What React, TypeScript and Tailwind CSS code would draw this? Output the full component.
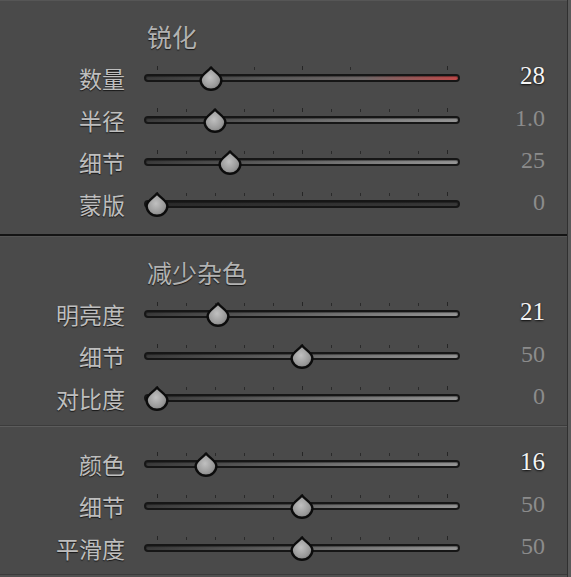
import React from "react";

type Row = {
  label: string;
  value: string;
  frac: number;
  active?: boolean;
  kind?: "amount" | "mask" | "normal";
};

const TICKS_10 = [0, 0.1, 0.2, 0.3, 0.4, 0.5, 0.6, 0.7, 0.8, 0.9, 1];
const TICKS_AMOUNT = [0, 1 / 3, 0.5, 2 / 3, 1];

function Thumb({ id }: { id: string }) {
  return (
    <svg width="26" height="25" viewBox="0 0 26 25" className="block">
      <defs>
        <radialGradient id={id} cx="0.45" cy="0.45" r="0.7">
          <stop offset="0" stopColor="#c0c0c0" />
          <stop offset="0.6" stopColor="#999999" />
          <stop offset="1" stopColor="#6c6c6c" />
        </radialGradient>
      </defs>
      <path
        d="M13 1.4 C15 4.8 23.4 8.8 23.4 14 A10.4 9.8 0 0 1 2.6 14 C2.6 8.8 11 4.8 13 1.4 Z"
        fill={`url(#${id})`}
        stroke="#0c0c0c"
        strokeWidth="2.4"
        strokeLinejoin="round"
      />
    </svg>
  );
}

function Slider({ row, id }: { row: Row; id: string }) {
  const ticks = row.kind === "amount" ? TICKS_AMOUNT : TICKS_10;
  const trackClass =
    row.kind === "amount"
      ? "bg-[linear-gradient(to_right,#3a3a3a,#5a5a5a_40%,#706868_70%,#c04a4a)]"
      : row.kind === "mask"
        ? "bg-[linear-gradient(to_right,#2a2a2a,#383838)]"
        : "bg-[linear-gradient(to_right,#3a3a3a,#5e5e5e_40%,#848484_80%,#949494)]";
  return (
    <div className="relative w-[316px] h-[42px] shrink-0">
      {ticks.map((f, i) => {
        const major = i === 0 || i === ticks.length - 1 || Math.abs(f - 0.5) < 0.001;
        return (
          <div
            key={i}
            className={
              major
                ? "absolute top-[9px] h-[4px] w-px bg-[#262626]"
                : "absolute top-[10px] h-[3px] w-px bg-[#2a2a2a]"
            }
            style={{ left: 13 + 290 * f }}
          />
        );
      })}
      <div
        className={`absolute left-0 right-0 top-[17px] h-[8px] rounded-full border-2 border-[#161616] shadow-[inset_0_1px_1px_rgba(0,0,0,0.4)] ${trackClass}`}
      />
      <div className="absolute top-[9px]" style={{ left: 13 + 290 * row.frac - 13 }}>
        <Thumb id={id} />
      </div>
    </div>
  );
}

function SliderRow({ row, id }: { row: Row; id: string }) {
  return (
    <div className="flex h-[42px] items-center">
      <div className="w-[125px] shrink-0 text-right text-[23px] leading-[42px] text-[#bebebe] [text-shadow:0_1px_1px_rgba(0,0,0,0.7)]">
        {row.label}
      </div>
      <div className="w-[19px] shrink-0" />
      <Slider row={row} id={id} />
      <div
        className={
          row.active
            ? "w-[85px] shrink-0 pb-[5px] text-right font-['Liberation_Serif',serif] text-[25px] leading-[30px] text-[#f4f4f4] [text-shadow:0_1px_2px_rgba(0,0,0,0.85)]"
            : "w-[85px] shrink-0 pb-[5px] text-right font-['Liberation_Serif',serif] text-[24px] leading-[30px] text-[#8c8c8c]"
        }
      >
        {row.value}
      </div>
    </div>
  );
}

function Header({ title }: { title: string }) {
  return (
    <div className="h-[56px] pl-[147px] pt-[23px] text-[25px] leading-[25px] text-[#b2b2b2] [text-shadow:0_1px_1px_rgba(0,0,0,0.7)]">
      {title}
    </div>
  );
}

const sharpen: Row[] = [
  { label: "数量", value: "28", frac: 28 / 150, active: true, kind: "amount" },
  { label: "半径", value: "1.0", frac: 0.2 },
  { label: "细节", value: "25", frac: 0.25 },
  { label: "蒙版", value: "0", frac: 0, kind: "mask" },
];

const luminance: Row[] = [
  { label: "明亮度", value: "21", frac: 0.21, active: true },
  { label: "细节", value: "50", frac: 0.5 },
  { label: "对比度", value: "0", frac: 0 },
];

const color: Row[] = [
  { label: "颜色", value: "16", frac: 0.17, active: true },
  { label: "细节", value: "50", frac: 0.5 },
  { label: "平滑度", value: "50", frac: 0.5 },
];

export default function App() {
  return (
    <div className="flex w-[571px] h-[577px] overflow-hidden bg-[#555555] font-['Noto_Sans_CJK_SC','Noto_Sans',sans-serif]">
      <div className="flex w-[567px] shrink-0 flex-col bg-[#4a4a4a]">
        <div className="h-px bg-[#565656]" />
        <Header title="锐化" />
        {sharpen.map((r, i) => (
          <SliderRow key={i} row={r} id={`s${i}`} />
        ))}
        <div className="h-[9px]" />
        <div className="h-[2px] bg-[#141414]" />
        <div className="h-px bg-[#545454]" />
        <Header title="减少杂色" />
        {luminance.map((r, i) => (
          <SliderRow key={i} row={r} id={`l${i}`} />
        ))}
        <div className="h-[6px]" />
        <div className="h-px bg-[#3c3c3c]" />
        <div className="h-px bg-[#5c5c5c]" />
        <div className="h-[16px]" />
        {color.map((r, i) => (
          <SliderRow key={i} row={r} id={`c${i}`} />
        ))}
        <div className="h-[5px]" />
        <div className="h-px bg-[#3a3a3a]" />
        <div className="flex-1 bg-[#505050]" />
      </div>
      <div className="w-px shrink-0 bg-[#303030]" />
      <div className="flex-1 bg-[#5a5a5a]" />
    </div>
  );
}
